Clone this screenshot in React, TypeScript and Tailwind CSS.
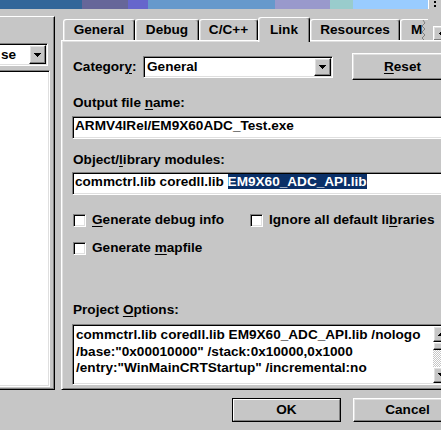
import React from 'react';

// classic 3D edges
const raised =
  'border border-t-white border-l-white border-r-black border-b-black shadow-[inset_-1px_-1px_0_#808080,inset_1px_1px_0_#dfdfdf]';
const sunken =
  'border border-t-[#808080] border-l-[#808080] border-r-white border-b-white shadow-[inset_1px_1px_0_#000,inset_-1px_-1px_0_#dfdfdf]';

type Dir = 'down' | 'up' | 'left' | 'right';

const Arrow = ({ dir = 'down' }: { dir?: Dir }) => {
  const paths: Record<Dir, string> = {
    down: 'M0 0h7v1H0z M1 1h5v1H1z M2 2h3v1H2z M3 3h1v1H3z',
    up: 'M3 0h1v1H3z M2 1h3v1H2z M1 2h5v1H1z M0 3h7v1H0z',
    left: 'M3 0h1v7H3z M2 1h1v5H2z M1 2h1v3H1z M0 3h1v1H0z',
    right: 'M0 0h1v7H0z M1 1h1v5H1z M2 2h1v3H2z M3 3h1v1H3z',
  };
  const vert = dir === 'down' || dir === 'up';
  return (
    <svg
      width={vert ? 7 : 4}
      height={vert ? 4 : 7}
      viewBox={vert ? '0 0 7 4' : '0 0 4 7'}
      shapeRendering="crispEdges"
    >
      <path d={paths[dir]} fill="#000" />
    </svg>
  );
};

const U = ({ children }: { children: React.ReactNode }) => (
  <span className="underline underline-offset-[2px]">{children}</span>
);

const DropButton = ({ className = '' }: { className?: string }) => (
  <div className={`${raised} bg-[#c6c6c6] flex items-center justify-center shrink-0 ${className}`}>
    <Arrow dir="down" />
  </div>
);

const Checkbox = ({ children }: { children: React.ReactNode }) => (
  <div className="flex items-center gap-[6px]">
    <div className={`${sunken} bg-white w-[13px] h-[13px] shrink-0`} />
    <span className="whitespace-nowrap">{children}</span>
  </div>
);

const Tab = ({
  label,
  width,
  selected = false,
}: {
  label: string;
  width: string;
  selected?: boolean;
}) => (
  <div
    className={`${width} ${
      selected ? 'h-[25px] mb-[-2px] pt-[4px] relative z-10' : 'h-[21px] pt-[2px]'
    } shrink-0 bg-[#c6c6c6] border-t border-l border-r border-t-white border-l-white border-r-black rounded-t-[3px] shadow-[inset_-1px_0_0_#808080,inset_1px_0_0_#dfdfdf] flex justify-center whitespace-nowrap`}
  >
    {label}
  </div>
);

const LeftPanel = () => (
  <div className="w-[55px] h-full shrink-0 overflow-hidden border-t border-r border-b border-t-white border-r-black border-b-black shadow-[inset_-1px_-1px_0_#808080] flex flex-col">
    <div className={`${sunken} bg-white ml-[-20px] mt-[26px] w-[68px] h-[23px] p-[1px] flex items-stretch`}>
      <div className="flex-1 flex items-center justify-end pr-[13px]">se</div>
      <DropButton className="w-[17px]" />
    </div>
    <div className={`${sunken} bg-white ml-[-20px] mt-[4px] w-[70px] h-[317px]`} />
  </div>
);

const TabControl = () => (
  <div className="ml-[6px] w-[420px] shrink-0 flex flex-col">
    <div className="flex items-end h-[24px] pl-[2px] shrink-0">
      <Tab label="General" width="w-[72px]" />
      <Tab label="Debug" width="w-[64px]" />
      <Tab label="C/C++" width="w-[59px]" />
      <Tab label="Link" width="w-[52px]" selected />
      <Tab label="Resources" width="w-[90px]" />
      <div className="w-[28px] h-[21px] pt-[2px] shrink-0 flex border-t border-l border-t-white border-l-white rounded-tl-[3px] shadow-[inset_1px_0_0_#dfdfdf]">
        <span className="pl-[10px]">M</span>
        <svg width="6" height="20" viewBox="0 0 6 20" className="ml-[-1px] mt-[-2px]">
          <polyline points="2,0 4,3 1,6 4,9 1,12 4,15 1,18 3,20" fill="none" stroke="#808080" strokeWidth="1" />
        </svg>
      </div>
      <div className="flex shrink-0 ml-[5px] mb-[-1px]">
        <div className={`${raised} bg-[#c6c6c6] w-[15px] h-[15px] flex items-center justify-center`}>
          <Arrow dir="left" />
        </div>
        <div className={`${raised} bg-[#c6c6c6] w-[15px] h-[15px] flex items-center justify-center`}>
          <Arrow dir="right" />
        </div>
      </div>
    </div>

    <div className="flex-1 flex flex-col border-t border-l border-b border-t-white border-l-white border-b-black shadow-[inset_1px_1px_0_#dfdfdf,inset_0_-1px_0_#808080] pl-[10px] pt-[12px]">
      {/* category row */}
      <div className="flex items-center h-[27px]">
        <div className="w-[71px] pl-[1px] whitespace-nowrap">
          Categor<U>y</U>:
        </div>
        <div className={`${sunken} bg-white w-[190px] h-[22px] p-[1px] flex items-stretch`}>
          <div className="flex-1 flex items-center pl-[2px]">General</div>
          <DropButton className="w-[17px]" />
        </div>
        <div className={`${raised} bg-[#c6c6c6] ml-[19px] w-[101px] h-[27px] shrink-0 flex items-center justify-center`}>
          <span>
            <U>R</U>eset
          </span>
        </div>
      </div>

      <div className="mt-[15px] h-[16px] pl-[1px] whitespace-nowrap">
        Output file <U>n</U>ame:
      </div>
      <div className={`${sunken} bg-white mt-[5px] h-[23px] w-[380px] pl-[2px] pt-[1px] whitespace-nowrap`}>
        ARMV4IRel/EM9X60ADC_Test.exe
      </div>

      <div className="mt-[13px] h-[16px] pl-[1px] whitespace-nowrap">
        Object/<U>l</U>ibrary modules:
      </div>
      <div className={`${sunken} bg-white mt-[4px] h-[23px] w-[380px] pl-[2px] pt-[1px] whitespace-nowrap`}>
        commctrl.lib coredll.lib <span className="bg-[#0a3068] text-white">EM9X60_ADC_API.lib</span>
      </div>

      <div className="mt-[17px] h-[16px] pl-[1px] flex items-center">
        <div className="w-[177px]">
          <Checkbox>
            <U>G</U>enerate debug info
          </Checkbox>
        </div>
        <Checkbox>
          Ignore all default li<U>b</U>raries
        </Checkbox>
      </div>
      <div className="mt-[12px] h-[16px] pl-[1px] flex items-center">
        <Checkbox>
          Generate <U>m</U>apfile
        </Checkbox>
      </div>

      <div className="mt-[46px] h-[16px] pl-[1px] whitespace-nowrap">
        Project <U>O</U>ptions:
      </div>
      <div className={`${sunken} bg-white mt-[6px] h-[61px] w-[380px] p-[1px] flex`}>
        <div className="w-[359px] pl-[2px] pt-[1px] leading-[16.5px] whitespace-nowrap overflow-hidden">
          <div>commctrl.lib coredll.lib EM9X60_ADC_API.lib /nologo</div>
          <div>/base:"0x00010000" /stack:0x10000,0x1000</div>
          <div>/entry:"WinMainCRTStartup" /incremental:no</div>
        </div>
        <div className="w-[16px] flex flex-col shrink-0">
          <div className={`${raised} bg-[#c6c6c6] h-[16px] flex items-center justify-center`}>
            <Arrow dir="up" />
          </div>
          <div className={`${raised} bg-[#c6c6c6] h-[8px]`} />
          <div className="flex-1 bg-[repeating-conic-gradient(#ffffff_0_25%,#c6c6c6_0_50%)] bg-[length:2px_2px]" />
          <div className={`${raised} bg-[#c6c6c6] h-[16px] flex items-center justify-center`}>
            <Arrow dir="down" />
          </div>
        </div>
      </div>
    </div>
  </div>
);

export default function App() {
  return (
    <div className="w-[441px] h-[430px] overflow-hidden bg-[#c6c6c6] font-['Liberation_Sans',Arial,sans-serif] font-bold text-[13.6px] leading-[16px] text-black flex flex-col select-none">
      {/* strip of the window behind */}
      <div className="flex h-[9px] shrink-0">
        <div className="w-[82px] bg-[#336699]" />
        <div className="w-[46px] bg-[#666699]" />
        <div className="w-[20px] bg-[#6666cc]" />
        <div className="w-[127px] bg-[#6699cc]" />
        <div className="w-[55px] bg-[#9999cc]" />
        <div className="w-[23px] bg-[#99cccc]" />
        <div className="w-[75px] bg-[#99ccff]" />
        <div className="w-[13px] bg-[#c6c6c6] border-l border-white flex flex-col items-center pt-[1px] gap-[2px]">
          <div className="w-[2px] h-[2px] bg-black" />
          <div className="w-[2px] h-[2px] bg-black" />
        </div>
      </div>

      <div className="flex mt-[7px] h-[374px] shrink-0">
        <LeftPanel />
        <TabControl />
      </div>

      <div className="flex mt-[8px] pl-[232px] gap-[12px] shrink-0">
        <div className="w-[109px] h-[24px] shrink-0 border border-black">
          <div className="h-full border border-t-white border-l-white border-r-[#808080] border-b-[#808080] flex items-center justify-center">
            OK
          </div>
        </div>
        <div className={`${raised} bg-[#c6c6c6] w-[109px] h-[24px] shrink-0 flex items-center justify-center`}>
          Cancel
        </div>
      </div>
    </div>
  );
}
